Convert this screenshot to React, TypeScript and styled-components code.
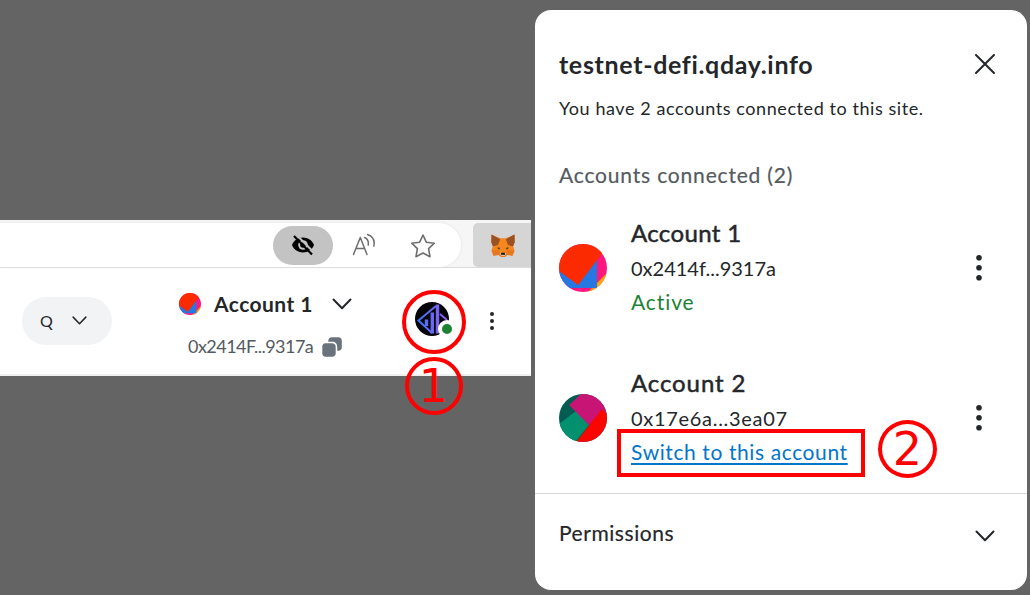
import React from "react";
import styled, { createGlobalStyle, css } from "styled-components";

const GlobalStyle = createGlobalStyle`
  * { box-sizing: border-box; }
  body { margin: 0; background: #646464; }
`;

const Page = styled.main`
  position: relative;
  display: flex;
  align-items: flex-start;
  gap: 4px;
  width: 1030px;
  height: 595px;
  overflow: hidden;
  background: #646464;
  color: #24272a;
  font-family: Lato, "Open Sans", sans-serif;
  svg { flex: none; }
`;

const Browser = styled.section`
  width: 531px;
  height: 156px;
  margin-top: 220px;
  background: #fff;
  border-bottom: 2px solid #f0f0f1;
`;

const Toolbar = styled.header`
  display: flex;
  justify-content: space-between;
  height: 48px;
  padding-top: 3px;
  background: #f6f6f6;
  border-bottom: 1px solid #dcdcdc;
`;

const AddressBar = styled.div`
  display: flex;
  align-items: center;
  width: 461px;
  height: 44px;
  padding: 0 25px 0 273px;
  background: #fff;
  border-radius: 0 22px 22px 0;
  box-shadow: 0 0 3px #e2e2e2;
`;

const HiddenPill = styled.span`
  display: flex;
  align-items: center;
  justify-content: center;
  width: 60px;
  height: 39px;
  margin-right: 19px;
  border-radius: 20px;
  background: #c3c3c3;
`;

const Spacer = styled.span`
  flex: 1;
`;

const ExtensionTab = styled.div`
  display: flex;
  align-items: center;
  justify-content: center;
  width: 58px;
  height: 44px;
  padding-left: 2px;
  border-radius: 5px 0 0 5px;
  background: #d5d5d5;
`;

const WalletBar = styled.div`
  display: flex;
  height: 106px;
  padding-left: 22px;
`;

const NetworkButton = styled.button`
  display: flex;
  align-items: center;
  gap: 19px;
  width: 90px;
  height: 48px;
  margin: 29px 67px 0 0;
  padding: 0 0 1px 18px;
  border: 0;
  border-radius: 24px;
  background: #f2f3f5;
  color: #24272a;
  font: 16px Lato, sans-serif;
`;

const AccountPicker = styled.div`
  width: 175px;
  padding-top: 23px;
`;

const PickerRow = styled.div<{ $indent?: number; $gap: number }>`
  display: flex;
  align-items: center;
  height: 26px;
  padding-left: ${(p) => p.$indent ?? 0}px;
  gap: ${(p) => p.$gap}px;
  & + & { margin-top: 17px; }
`;

const PickerArrow = styled.span`
  display: flex;
  margin-left: 6px;
`;

const SiteBadge = styled.div`
  position: relative;
  width: 34px;
  height: 34px;
  margin: 34px 38px 0 61px;
`;

const StatusDot = styled.span`
  position: absolute;
  left: 23px;
  top: 18px;
  width: 18px;
  height: 18px;
  border: 4px solid #fff;
  border-radius: 50%;
  background: #1c8234;
`;

const WalletMenu = styled.div`
  margin-top: 44px;
`;

const Dialog = styled.section`
  display: flex;
  flex-direction: column;
  width: 492px;
  height: 580px;
  margin-top: 10px;
  border-radius: 16px;
  background: #fff;
`;

const DialogBody = styled.div`
  height: 484px;
  padding: 38px 24px 0;
  border-bottom: 1px solid #d6d9dc;
`;

const TitleRow = styled.div`
  display: flex;
  justify-content: space-between;
  align-items: center;
  height: 32px;
  padding-right: 8px;
`;

const type = css<{ $size: number; $weight?: number; $spacing?: number }>`
  font-size: ${(p) => p.$size}px;
  font-weight: ${(p) => (p.$weight === 700 ? 700 : 400)};
  -webkit-text-stroke: ${(p) => (p.$weight === 600 ? "0.5px" : p.$weight === 500 ? "0.2px" : "0")};
  letter-spacing: ${(p) => p.$spacing ?? 0}px;
  white-space: nowrap;
`;

const Label = styled.span<{ $size: number; $weight?: number; $spacing?: number; $color?: string }>`
  ${type}
  line-height: 22px;
  padding-bottom: ${(p) => (p.$weight === 700 ? 0 : 2)}px;
  color: ${(p) => p.$color ?? "#24272a"};
`;

const Line = styled.p<{ $size: number; $weight?: number; $spacing?: number; $color?: string; $height: number; $top?: number }>`
  ${type}
  margin: ${(p) => p.$top ?? 0}px 0 0;
  line-height: ${(p) => p.$height}px;
  color: ${(p) => p.$color ?? "#24272a"};
`;

const AccountList = styled.div`
  margin-top: 28px;
`;

const AccountRow = styled.article`
  display: flex;
  align-items: flex-start;
  height: 120px;
  padding: 25px 19px 0 0;
  & + & { margin-top: 30px; }
`;

const AccountText = styled.div`
  flex: 1;
  margin: -28px 0 0 24px;
`;

const SwitchLink = styled.a<{ $size: number; $spacing?: number }>`
  ${type}
  display: inline-block;
  height: 32px;
  line-height: 32px;
  color: #0376c9;
  text-decoration: underline;
  text-decoration-thickness: 2px;
  text-underline-offset: 3px;
  text-decoration-skip-ink: none;
`;

const MenuSlot = styled.div`
  display: flex;
  align-items: center;
  height: 48px;
`;

const Permissions = styled.button`
  display: flex;
  align-items: center;
  justify-content: space-between;
  height: 83px;
  padding: 0 32px 0 24px;
  border: 0;
  background: none;
  font-family: inherit;
  & > span { margin-bottom: 3px; }
`;

const Highlight = styled.div<{ $x: number; $y: number; $w: number; $h: number; $round?: boolean }>`
  position: absolute;
  left: ${(p) => p.$x}px;
  top: ${(p) => p.$y}px;
  width: ${(p) => p.$w}px;
  height: ${(p) => p.$h}px;
  display: flex;
  align-items: center;
  justify-content: center;
  border: 4px solid #f00;
  border-radius: ${(p) => (p.$round ? "50%" : "0")};
  color: #f00;
  font: 46px/1 "DejaVu Sans", sans-serif;
`;

const Chevron = ({ width, stroke = 2 }: { width: number; stroke?: number }) => (
  <svg width={width} height={width * 0.6} viewBox="0 0 20 12" fill="none" stroke="#24272a" strokeWidth={stroke} strokeLinecap="round" strokeLinejoin="round">
    <path d="M1.5 1.5 10 10.2 18.5 1.5" />
  </svg>
);

const Dots = ({ w, gap, r }: { w: number; gap: number; r: number }) => (
  <svg width={w} height={gap * 2 + r * 2} fill="#24272a">
    {[0, 1, 2].map((i) => (
      <circle key={i} cx={w / 2} cy={r + i * gap} r={r} />
    ))}
  </svg>
);

const AvatarOne = ({ size }: { size: number }) => (
  <svg width={size} height={size} viewBox="0 0 48 48">
    <clipPath id={`one${size}`}><circle cx="24" cy="24" r="24" /></clipPath>
    <g clipPath={`url(#one${size})`}>
      <path fill="#ff1780" d="M0 0h48v48H0z" />
      <path fill="#faa900" d="M28 49 49 28v21z" />
      <path fill="#2677e1" d="M0 26 19 40 38 15v29H0z" />
      <path fill="#fb2a00" d="M0 0h48v3L19 41 0 27z" />
    </g>
  </svg>
);

const AvatarTwo = () => (
  <svg width="48" height="48" viewBox="0 0 48 48">
    <clipPath id="two"><circle cx="24" cy="24" r="24" /></clipPath>
    <g clipPath="url(#two)">
      <path fill="#025c52" d="M0 0h48v48H0z" />
      <path fill="#03906f" d="M0 30 17 17l13 14-14 17H0z" />
      <path fill="#c81475" d="M10 11 22 0h26v20l-18 11z" />
      <path fill="#fb0500" d="m43 15 6 6v27H17z" />
    </g>
  </svg>
);

const HiddenEye = () => (
  <svg width="24" height="24" viewBox="0 0 24 24" fill="none">
    <path fill="#000" d="M1 12C3 7.300 7 4.500 12 4.500S21 7.300 23 12c-2 4.700-6 7.500-11 7.500S3 16.700 1 12z" />
    <circle cx="12" cy="12" r="4.800" fill="#c3c3c3" />
    <circle cx="12" cy="12" r="2.800" fill="#000" />
    <path stroke="#c3c3c3" strokeWidth="2" d="m5 1.500 18 18" />
    <path stroke="#000" strokeWidth="2.200" d="m3 3 18 18.500" />
  </svg>
);

const ReadAloud = () => (
  <svg width="24" height="24" viewBox="0 0 24 24" fill="none" stroke="#6e6e6e" strokeWidth="1.500" strokeLinecap="round" strokeLinejoin="round">
    <path d="M1.500 21.500 8.300 4.500 15 21.500M4 15.500h8.700M12.500 4.500c3 1.300 4.300 4 3.700 7.500M15.500 1.500c5.500 2 7.500 6.500 6.300 11.500" />
  </svg>
);

const Star = () => (
  <svg width="26" height="26" viewBox="0 0 26 26" fill="none" stroke="#6e6e6e" strokeWidth="1.600" strokeLinejoin="round">
    <path d="m13 3 3.300 7.200 8 1-5.700 5.500 1.400 8-7-3.700-7 3.700 1.400-8-5.700-5.500 8-1z" />
  </svg>
);

const Fox = () => (
  <svg width="24" height="23" viewBox="0 0 24 23">
    <path fill="#e8781f" d="m.5.5 9 4h5l9-4 .2 8-1.700 4 1.500 4.500-2 5-5-1-2.500 2h-4l-2.500-2-5 1-2-5L2 12.500.3 8.500z" />
    <path fill="#9a5225" d="m.5.500 9 5-2 5.500-5.500 1.500L.3 8zM23.500.500l-9 5 2 5.500 5.500 1.500L23.700 8z" />
    <path fill="#f6871f" d="M9.500 4.500h5L17 11l-2 8H9L7 11zM2 12.500 7.500 11l1 4.500-8 1zM22 12.500 16.500 11l-1 4.500 8 1z" />
    <path fill="#6d4930" d="m6.500 13 2.700 1-.5 1.500-2-.5zM17.500 13l-2.700 1 .5 1.500 2-.5z" />
    <path fill="#d7c1b3" d="m8.500 19.500 1.500-.5h4l1.500.5-2 2.500h-3z" />
    <path fill="#161616" d="M10.300 18.700h3.400l.5 2h-4.400z" />
  </svg>
);

const SiteLogo = () => (
  <svg width="34" height="34" viewBox="0 0 34 34" fill="none">
    <defs>
      <linearGradient id="brand" x1="0" x2="34" y1="0" y2="0" gradientUnits="userSpaceOnUse">
        <stop stopColor="#3277ff" /><stop offset="1" stopColor="#9a5ae8" />
      </linearGradient>
    </defs>
    <circle cx="17" cy="17" r="17" fill="#050509" />
    <g stroke="url(#brand)" strokeWidth="2">
      <path d="M21 4 3.500 18.500 17 31M25 12l7 6" />
      <path strokeWidth="3.400" d="M11.500 17.500v6.500M17.300 10.500v21M22.500 2.500v29" />
    </g>
  </svg>
);

const CopyIcon = () => (
  <svg width="20" height="20" viewBox="0 0 20 20" fill="#6a737d">
    <path d="M3.500 6.300h6.700c2 0 3.500 1.500 3.500 3.500v6.400c0 2-1.500 3.500-3.500 3.500H3.500C1.500 19.700.3 18.200.3 16.200V9.800c0-2 1.200-3.500 3.200-3.500z" />
    <path d="M9.800.3h6.700c2 0 3.300 1.500 3.300 3.500v6.400c0 2-1.300 3.500-3.300 3.500h-1.300V9.800c0-3-2-5-5-5H6.300v-1c0-2 1.500-3.500 3.500-3.500z" />
  </svg>
);

const AccountMenu = () => (
  <MenuSlot><Dots w={10} gap={10} r={2.8} /></MenuSlot>
);

export default function App() {
  return (
    <>
      <GlobalStyle />
      <Page>
        <Browser>
          <Toolbar>
            <AddressBar>
              <HiddenPill><HiddenEye /></HiddenPill>
              <ReadAloud />
              <Spacer />
              <Star />
            </AddressBar>
            <ExtensionTab><Fox /></ExtensionTab>
          </Toolbar>
          <WalletBar>
            <NetworkButton>Q<Chevron width={15} /></NetworkButton>
            <AccountPicker>
              <PickerRow $gap={13}>
                <AvatarOne size={22} />
                <Label $size={21} $weight={700} $spacing={0.45}>Account 1</Label>
                <PickerArrow><Chevron width={20} /></PickerArrow>
              </PickerRow>
              <PickerRow $gap={9} $indent={9}>
                <Label $size={18} $spacing={-0.52} $color="#535a61">0x2414F...9317a</Label>
                <CopyIcon />
              </PickerRow>
            </AccountPicker>
            <SiteBadge><SiteLogo /><StatusDot /></SiteBadge>
            <WalletMenu><Dots w={10} gap={7} r={2} /></WalletMenu>
          </WalletBar>
        </Browser>
        <Dialog>
          <DialogBody>
            <TitleRow>
              <Label $size={25} $weight={700} $spacing={0.67}>testnet-defi.qday.info</Label>
              <svg width="20" height="20" stroke="#24272a" strokeWidth="2" strokeLinecap="round"><path d="m1 1 18 18M19 1 1 19" /></svg>
            </TitleRow>
            <Line $size={18} $height={28} $top={14} $spacing={0.57}>You have 2 accounts connected to this site.</Line>
            <Line $size={21} $weight={500} $height={32} $top={37} $spacing={0.82} $color="#535a61">Accounts connected (2)</Line>
            <AccountList>
              <AccountRow>
                <AvatarOne size={48} />
                <AccountText>
                  <Line $size={24} $weight={600} $height={34} $spacing={0.35}>Account 1</Line>
                  <Line $size={20} $height={36} $spacing={0}>0x2414f...9317a</Line>
                  <Line $size={21} $height={32} $spacing={0.9} $color="#1c8234">Active</Line>
                </AccountText>
                <AccountMenu />
              </AccountRow>
              <AccountRow>
                <AvatarTwo />
                <AccountText>
                  <Line $size={24} $weight={600} $height={34} $spacing={0.9}>Account 2</Line>
                  <Line $size={20} $height={36} $spacing={0.7}>0x17e6a...3ea07</Line>
                  <SwitchLink $size={21} $spacing={0.6}>Switch to this account</SwitchLink>
                </AccountText>
                <AccountMenu />
              </AccountRow>
            </AccountList>
          </DialogBody>
          <Permissions>
            <Label $size={21} $weight={500} $spacing={0.55}>Permissions</Label>
            <Chevron width={20} />
          </Permissions>
        </Dialog>
        <Highlight $x={402} $y={290} $w={64} $h={64} $round />
        <Highlight $x={404.500} $y={357} $w={58} $h={58} $round>1</Highlight>
        <Highlight $x={617} $y={429} $w={248} $h={48} />
        <Highlight $x={878} $y={420} $w={59} $h={58} $round>2</Highlight>
      </Page>
    </>
  );
}
